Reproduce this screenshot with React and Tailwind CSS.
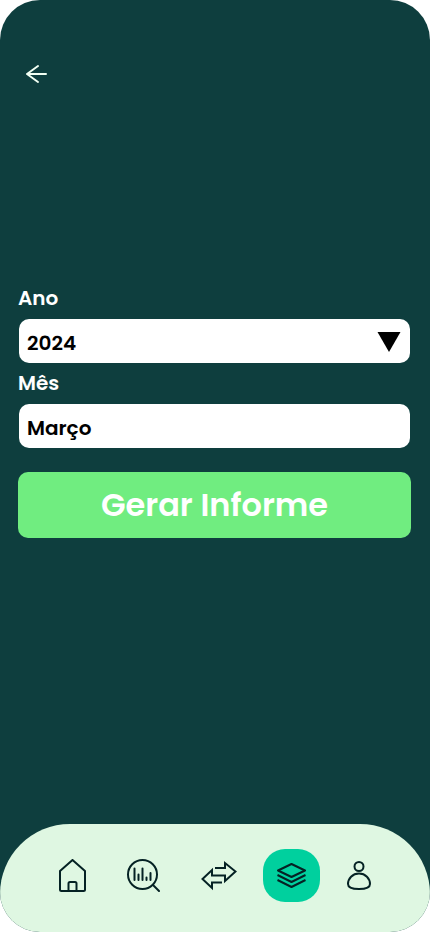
import React from 'react';

const stroke = {
  fill: 'none',
  stroke: 'currentColor',
  strokeWidth: 2,
  strokeLinecap: 'round',
  strokeLinejoin: 'round',
  'aria-hidden': true,
};

function BackIcon() {
  return (
    <svg width="24" height="24" viewBox="0 0 24 24" {...stroke}>
      <path d="M22 12H3M14 4L3 12l11 8" />
    </svg>
  );
}

function HomeIcon() {
  return (
    <svg width="27" height="33" viewBox="0 0 27 33" {...stroke}>
      <path d="M1 12L13.500 1L26 12V30.500Q26 32 24.500 32H2.500Q1 32 1 30.500Z" />
      <path d="M9.500 32V24.500Q9.500 23 11 23H16Q17.500 23 17.500 24.500V32" />
    </svg>
  );
}

function AnalysisIcon() {
  return (
    <svg width="33" height="33" viewBox="0 0 33 33" {...stroke}>
      <circle cx="15.500" cy="15.500" r="14.500" />
      <path d="M26 26L32 32" />
      <path d="M7.500 9.500V21M11.500 15.500V21M15.500 9.500V21M19.500 18.500V21M23.500 14V21" />
    </svg>
  );
}

function TransferIcon() {
  return (
    <svg width="36" height="33" viewBox="0 0 36 33" {...stroke} strokeLinecap="butt" strokeLinejoin="miter">
      <path d="M14 9H24V4L34.500 12.500L24 22V16.500H11V11L1.500 20L11 29V23.500H21" />
    </svg>
  );
}

function LayersIcon() {
  return (
    <svg width="29" height="33" viewBox="0 0 29 33" {...stroke} strokeLinecap="butt">
      <path d="M14.500 5L28 11.500L14.500 18L1 11.500Z" />
      <path d="M0.500 16L14.500 23L28.500 16" />
      <path d="M0.500 21L14.500 28L28.500 21" />
    </svg>
  );
}

function ProfileIcon() {
  return (
    <svg width="25" height="33" viewBox="0 0 25 33" {...stroke}>
      <circle cx="13" cy="7.500" r="4.500" />
      <path d="M13 14.500C19.500 14.500 24 19.500 24 25C24 28.500 19 30 13 30S2 28.500 2 25C2 19.500 6.500 14.500 13 14.500Z" />
    </svg>
  );
}

const fieldClass =
  'block h-11 w-full appearance-none rounded-[10px] border-0 bg-white px-2 pt-[3px] text-xl font-semibold text-black';

export default function App() {
  return (
    <div className="flex min-h-screen flex-col overflow-hidden rounded-[40px] bg-[#0e3e3e] font-['Poppins','Inter',sans-serif]">
      <header className="flex px-6 pt-[62px]">
        <button type="button" aria-label="Voltar" className="text-[#f1fff3]">
          <BackIcon />
        </button>
      </header>

      <main className="flex-1 pt-[197px] pr-[19px] pl-[18px]">
        <form onSubmit={(e) => e.preventDefault()}>
          <label htmlFor="ano" className="block text-xl leading-[30px] font-semibold text-white">
            Ano
          </label>
          <div className="relative mx-px mt-1.5">
            <select id="ano" defaultValue="2024" className={fieldClass}>
              <option>2024</option>
              <option>2023</option>
              <option>2022</option>
            </select>
            <svg
              width="24"
              height="21"
              viewBox="0 0 24 21"
              aria-hidden="true"
              className="pointer-events-none absolute top-3 right-[9px]"
            >
              <path d="M0.500 1H23.500L12 21Z" fill="#000" />
            </svg>
          </div>
          <label htmlFor="mes" className="mt-[5px] block text-xl leading-[30px] font-semibold text-white">
            Mês
          </label>
          <div className="mx-px mt-1.5">
            <input id="mes" type="text" defaultValue="Março" className={fieldClass} />
          </div>
          <button
            type="submit"
            className="mt-6 h-[66px] w-full rounded-[10px] bg-[#70ed80] text-[32px] font-semibold text-white"
          >
            Gerar Informe
          </button>
        </form>
      </main>

      <nav className="flex h-[108px] items-center justify-center gap-[41px] rounded-t-[70px] bg-[#dff7e2] pb-[5px] text-[#052224]">
        <a href="#inicio" aria-label="Início">
          <HomeIcon />
        </a>
        <a href="#analise" aria-label="Análise">
          <AnalysisIcon />
        </a>
        <a href="#transferencias" aria-label="Transferências">
          <TransferIcon />
        </a>
        <a
          href="#categorias"
          aria-label="Categorias"
          aria-current="page"
          className="-mx-[15px] flex h-[53px] w-[57px] items-center justify-center rounded-[22px] bg-[#00d09e]"
        >
          <LayersIcon />
        </a>
        <a href="#perfil" aria-label="Perfil">
          <ProfileIcon />
        </a>
      </nav>
    </div>
  );
}
